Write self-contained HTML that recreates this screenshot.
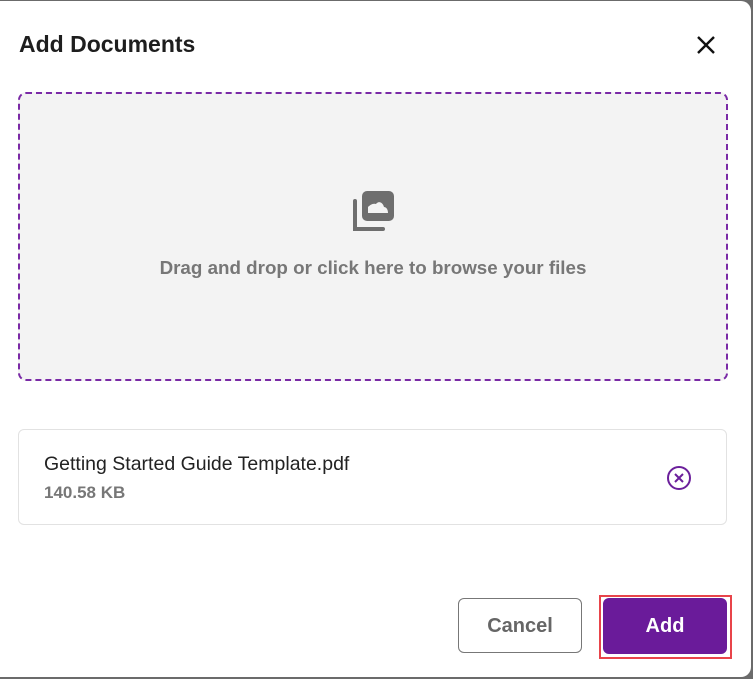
<!DOCTYPE html>
<html><head><style>
body{margin:0;width:753px;height:679px;background:#6b6b6b;font-family:"Liberation Sans",sans-serif;overflow:hidden;position:relative}
.dlg{position:absolute;left:0;top:1px;width:751px;height:676px;background:#fff;border-radius:0 10px 10px 0}
.t{position:absolute;left:19px;top:30px;font-size:23px;font-weight:bold;color:#1e1e1e}
.drop{position:absolute;left:18px;top:91px;width:706px;height:285px;border:2px dashed #7a2aa6;border-radius:8px;background:#f3f3f3}
.dt{position:absolute;left:0;right:0;top:163px;text-align:center;font-size:18.8px;font-weight:bold;color:#777}
.card{position:absolute;left:18px;top:428px;width:707px;height:94px;border:1px solid #e2e2e2;border-radius:6px}
.fn{position:absolute;left:25px;top:23px;font-size:19.5px;color:#222}
.fs{position:absolute;left:25px;top:53px;font-size:17px;font-weight:bold;color:#777}
.btn{position:absolute;top:598px;height:54px;border-radius:6px;font-size:20px;font-weight:bold;text-align:center;line-height:54px}
</style></head><body>
<div class="dlg">
<div class="t">Add Documents</div>
<svg style="position:absolute;left:696px;top:34px" width="20" height="20"><path d="M2 2L18 18M18 2L2 18" stroke="#111" stroke-width="2.4"/></svg>
<div class="drop">
<svg style="position:absolute;left:331px;top:95px" width="44" height="44" viewBox="0 0 44 44"><rect x="11" y="2" width="32" height="30" rx="5" fill="#6e6e6e"/><path d="M17 24h20c0-4-2-6-4-6c-1-4-5-7-8-3c-3-1-6 1-8 3z" fill="#f3f3f3"/><path d="M4 12v28h28" stroke="#6e6e6e" stroke-width="4" fill="none" stroke-linecap="round"/></svg>
<div class="dt">Drag and drop or click here to browse your files</div>
</div>
<div class="card">
<div class="fn">Getting Started Guide Template.pdf</div>
<div class="fs">140.58 KB</div>
<svg style="position:absolute;left:647px;top:35px" width="26" height="26"><circle cx="13" cy="13" r="11" stroke="#6b1f9b" stroke-width="2" fill="none"/><path d="M9 9l8 8M17 9l-8 8" stroke="#6b1f9b" stroke-width="2"/></svg>
</div>
<div class="btn" style="left:458px;width:122px;border:1px solid #777;height:53px;top:597px;color:#666">Cancel</div>
<div style="position:absolute;left:599px;top:594px;width:133px;height:64px;border:2px solid #e8444a;box-sizing:border-box"></div>
<div class="btn" style="left:603px;width:124px;background:#6a1b9a;color:#fff;top:597px;height:56px;line-height:56px">Add</div>
</div>
</body></html>
